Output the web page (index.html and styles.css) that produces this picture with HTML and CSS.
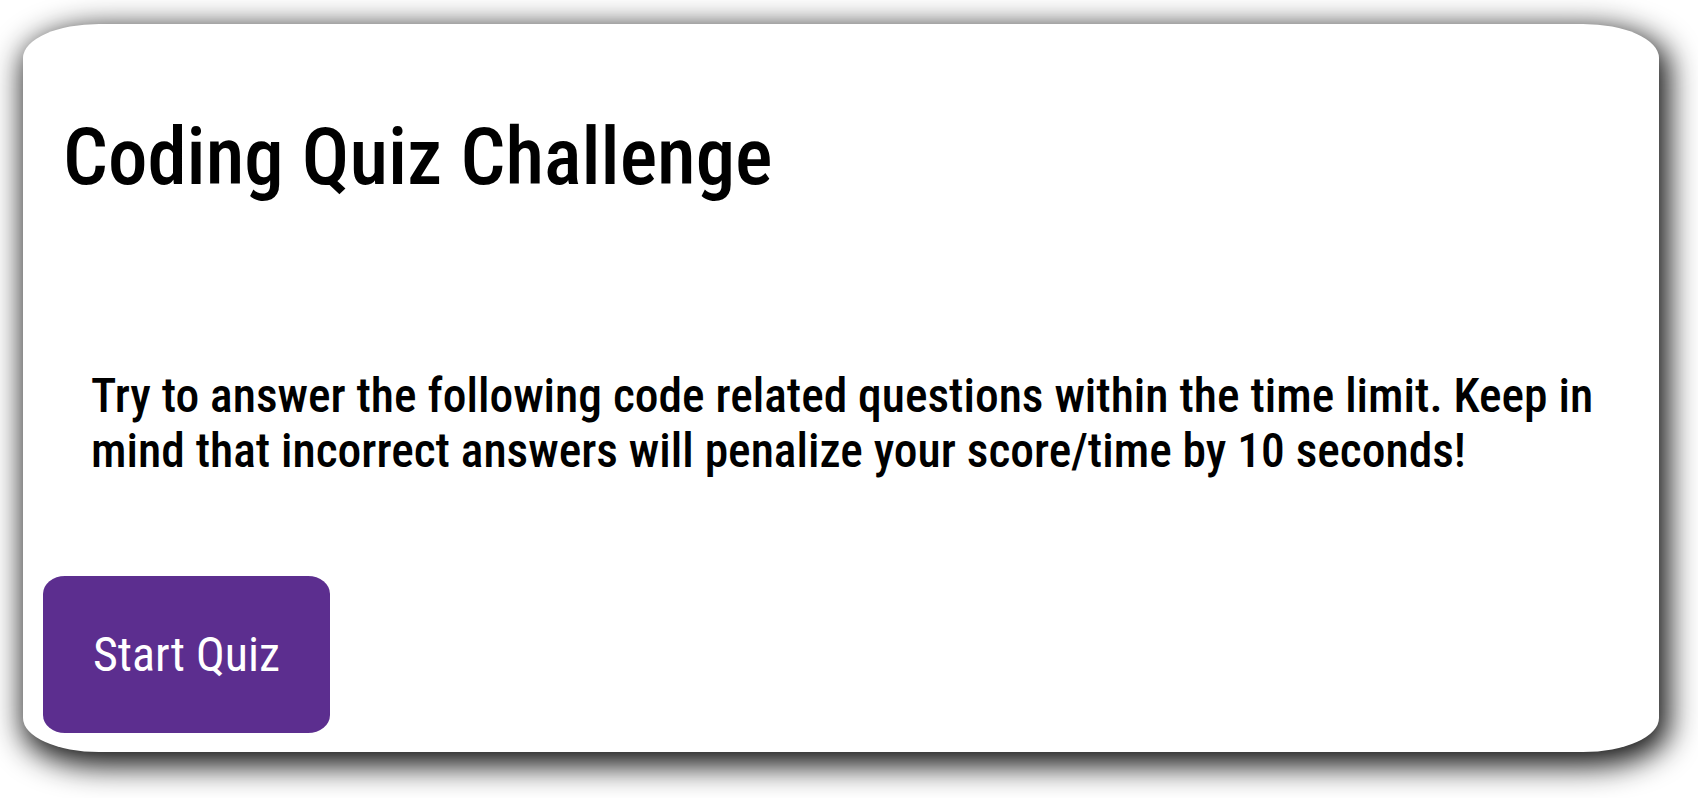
FILE: index.html
```html
<!DOCTYPE html>
<html lang="en">
<head>
<meta charset="utf-8">
<title>Coding Quiz Challenge</title>
<link rel="stylesheet" href="styles.css">
</head>
<body>
  <main class="card">
    <h1 class="title">Coding Quiz Challenge</h1>
    <p class="intro">Try to answer the following code related questions within the time limit. Keep in mind that incorrect answers will penalize your score/time by 10 seconds!</p>
    <button class="start-btn" type="button">Start Quiz</button>
  </main>
</body>
</html>
```

FILE: styles.css
```css
html, body {
  margin: 0;
  padding: 0;
  background: #ffffff;
}

body {
  box-sizing: border-box;
  min-height: 798px;
  padding: 24px 39px 46px 23px;
  font-family: "Roboto Condensed", "Liberation Sans Narrow", Roboto, sans-serif;
  color: #000;
}

.card {
  box-sizing: border-box;
  height: 728px;
  background: #fff;
  border-radius: 76px / 34px;
  box-shadow: 5px 9px 30px 5px rgba(0, 0, 0, 0.92);
  padding: 0 20px 19px 20px;
  display: flex;
  flex-direction: column;
  align-items: flex-start;
}

.title {
  margin: 86px 0 0 20px;
  font-size: 79px;
  font-weight: 500;
  line-height: 1.2;
}

.intro {
  margin: 164px 0 0 48px;
  font-size: 47.5px;
  font-weight: 500;
  line-height: 55px;
}

.start-btn {
  margin-top: auto;
  width: 287px;
  height: 157px;
  border: none;
  border-radius: 22px / 18px;
  background: #5c2e8f;
  color: #fff;
  font-family: inherit;
  font-size: 48px;
  font-weight: 400;
  padding: 0;
}
```
